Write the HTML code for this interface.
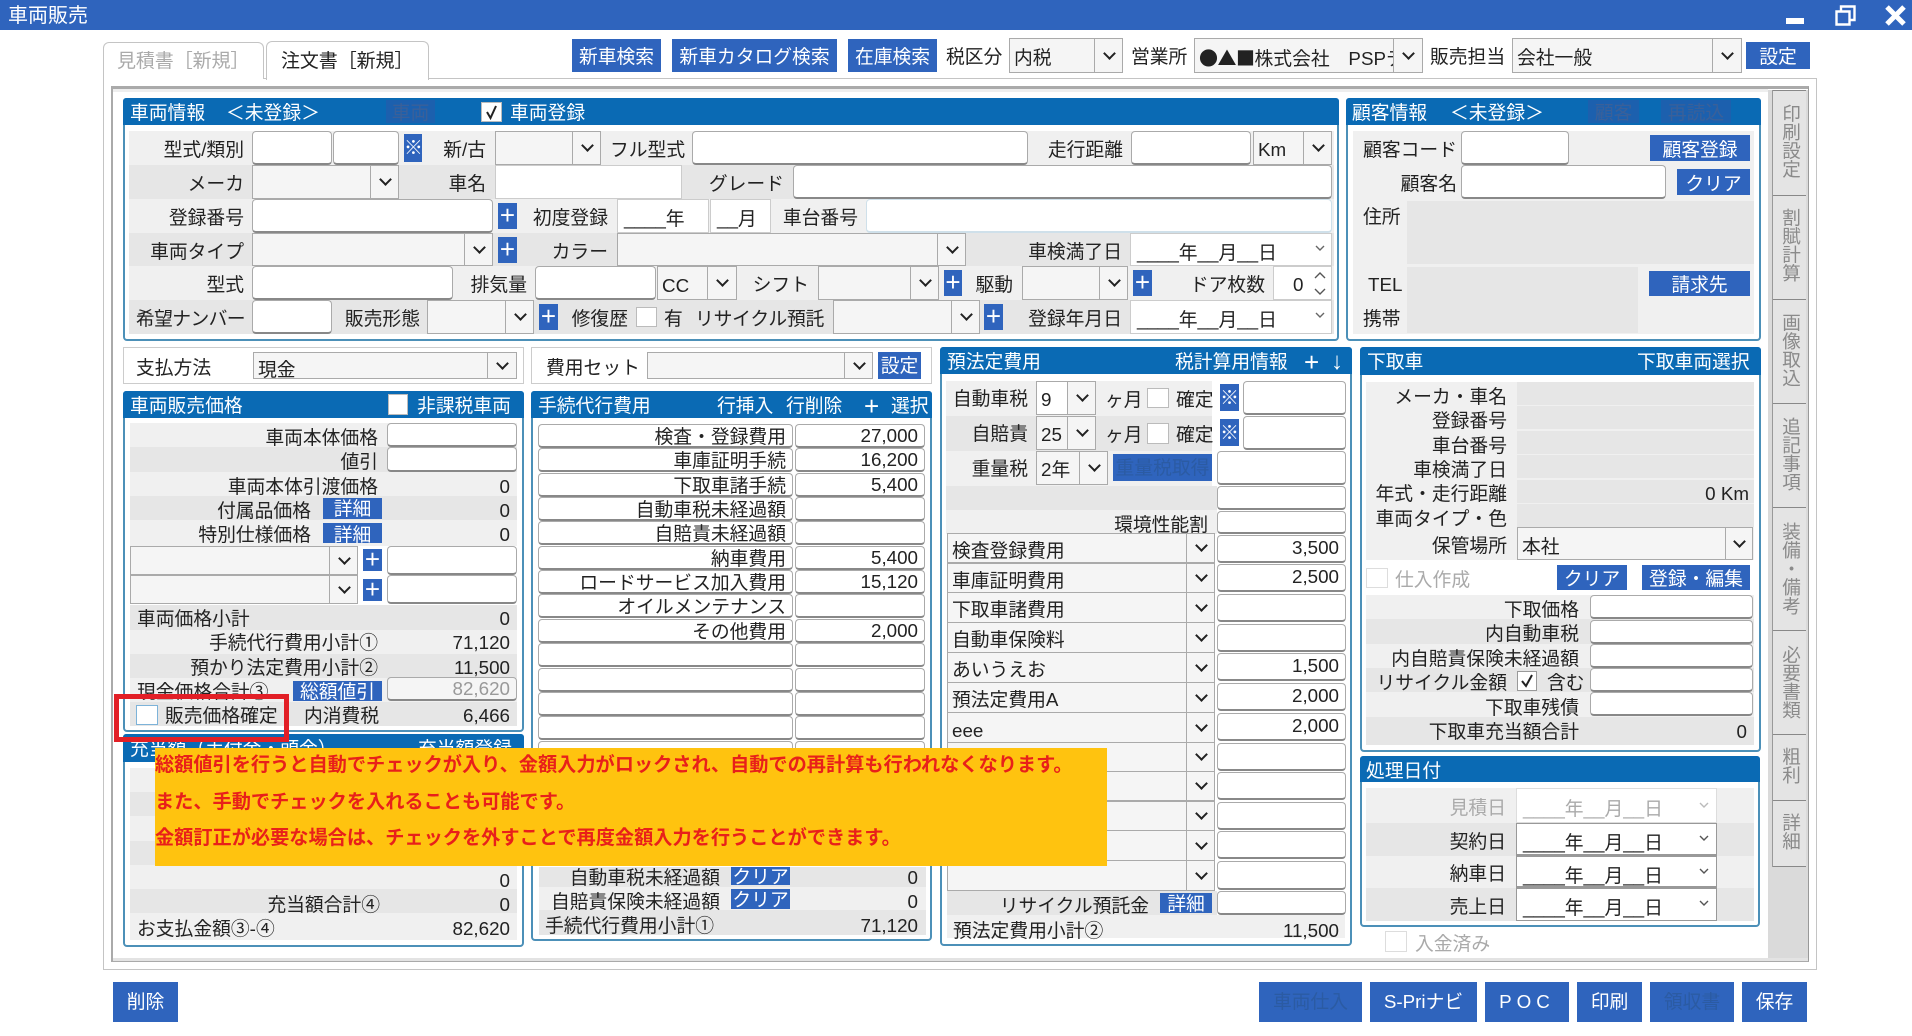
<!DOCTYPE html>
<html lang="ja"><head><meta charset="utf-8"><title>車両販売</title>
<style>
html,body{margin:0;padding:0;width:1912px;height:1036px;overflow:hidden;background:#fff}
body{position:relative;font:18.8px/24px "Liberation Sans","Noto Sans CJK JP",sans-serif;color:#222}
div,span.t{position:absolute;box-sizing:border-box}
.t{white-space:nowrap;height:24px;line-height:24px;margin-top:1px}
.q{margin-top:2px}
.z{margin-top:0}
.r{width:300px;text-align:right}
.w{color:#fff}
.g{color:#aaa}
.b{background:#f0f0f0}
.c{background:#e6e6e6}
.p{border:2px solid #4c90b8;border-radius:4px;background:#fff}
.h{background:#0a6ab4;border-radius:3px 3px 0 0}
.btn{background:#2f64bd;color:#fff;text-align:center;white-space:nowrap;overflow:hidden}
.dis{color:#2b5ba3}
.hd{background:#1c60ae;color:#3a6099;text-align:center;white-space:nowrap}
.i{background:#fff;border:1px solid #aaa;border-bottom:2px solid #888;border-radius:4px;text-align:right;padding-right:6px;overflow:hidden;white-space:nowrap}
.sel{background:#f5f5f5;border:1px solid #aaa;padding-left:4px;overflow:hidden;white-space:nowrap;--a:27px}
.sel::before{content:"";position:absolute;right:0;top:0;bottom:0;width:var(--a);background:#f5f5f5;border-left:1px solid #aaa}
.sel::after{content:"";position:absolute;right:calc(var(--a)/2 - 5px);top:calc(50% - 7px);width:7px;height:7px;border-right:2.5px solid #222;border-bottom:2.5px solid #222;transform:rotate(45deg)}
.d{background:#fff;border:1px solid #ccc;padding-left:6px;white-space:nowrap;overflow:hidden}
.cb{background:#fff;border:1px solid #bbb}
.pl{background:#2f64bd;color:#fff;text-align:center;font-size:26px;font-weight:300}
.st{width:34px;left:1772px;background:#e4e4e4;border-top:1px solid #888}
.v{writing-mode:vertical-rl;text-orientation:upright;left:1778px;width:24px;line-height:24px;font-size:18.6px;color:#8a8a8a;white-space:nowrap}
.y{z-index:7;color:#e8201a;font-weight:700;font-size:19.2px;margin-top:2px}
svg{position:absolute}
</style></head><body>

<!-- Title bar -->
<div style="left:0;top:0;width:1912px;height:30px;background:#2f64bd"></div>
<span class="t w" style="left:8px;top:3px;font-size:20px">車両販売</span>
<div style="left:1786px;top:18px;width:18px;height:6px;background:#fff"></div>
<svg style="left:1835px;top:5px" width="21" height="21"><path d="M6 6V1.5H19.5V15H15M1.5 6.5H14.5V19.5H1.5Z" fill="none" stroke="#fff" stroke-width="2.4"/></svg>
<svg style="left:1885px;top:5px" width="21" height="21"><path d="M2 2L19 19M19 2L2 19" stroke="#fff" stroke-width="5"/></svg>

<!-- Tabs and outer frame -->
<div style="left:103px;top:78px;width:1714px;height:892px;border:1px solid #c4c4c4;background:#fff"></div>
<div style="left:103px;top:42px;width:161px;height:37px;border:1px solid #c4c4c4;border-bottom:0;border-radius:6px 6px 0 0;background:#fff"></div>
<span class="t g" style="left:117px;top:49px;font-size:19px;letter-spacing:-.1px">見積書［新規］</span>
<div style="left:266px;top:41px;width:163px;height:39px;border:1px solid #c4c4c4;border-bottom:0;border-radius:6px 6px 0 0;background:#fff"></div>
<span class="t" style="left:281px;top:49px;font-size:19px;letter-spacing:-.1px">注文書［新規］</span>
<div style="left:111px;top:86px;width:1698px;height:876px;border:2px solid #aaa;border-top:3px solid #aaa;border-right:1px solid #999;background:#fff"></div>
<div style="left:113px;top:89px;width:1655px;height:3px;background:#eee"></div>
<div style="left:113px;top:958px;width:1695px;height:3px;background:#e3e3e3"></div>

<!-- Top toolbar -->
<div class="btn" style="left:572px;top:39px;width:89px;height:33px;line-height:35px">新車検索</div>
<div class="btn" style="left:672px;top:39px;width:165px;height:33px;line-height:35px">新車カタログ検索</div>
<div class="btn" style="left:848px;top:39px;width:89px;height:33px;line-height:35px">在庫検索</div>
<span class="t" style="left:946px;top:44px">税区分</span>
<div class="sel" style="left:1009px;top:38px;width:114px;height:35px;line-height:37px;--a:27px">内税</div>
<span class="t" style="left:1131px;top:44px">営業所</span>
<div class="sel" style="left:1194px;top:38px;width:229px;height:35px;line-height:37px;--a:28px"><span style="font-family:'Noto Sans CJK JP',sans-serif;font-size:19px;letter-spacing:-.5px">●▲■</span>株式会社　PSPテスト</div>
<span class="t" style="left:1430px;top:44px">販売担当</span>
<div class="sel" style="left:1512px;top:38px;width:230px;height:35px;line-height:37px;--a:28px">会社一般</div>
<div class="btn" style="left:1746px;top:42px;width:64px;height:27px;line-height:29px">設定</div>

<!-- Sidebar -->
<div style="left:1768px;top:90px;width:40px;height:868px;background:#dadada"></div>
<div class="st" style="top:90px;height:105px"></div>
<div class="st" style="top:195px;height:104px"></div>
<div class="st" style="top:299px;height:104px"></div>
<div class="st" style="top:403px;height:104px"></div>
<div class="st" style="top:507px;height:123px"></div>
<div class="st" style="top:630px;height:104px"></div>
<div class="st" style="top:734px;height:66px"></div>
<div class="st" style="top:800px;height:67px;border-bottom:1px solid #888"></div>
<div style="left:1772px;top:90px;width:1px;height:777px;background:#999"></div>
<div class="v" style="top:104px">印刷設定</div>
<div class="v" style="top:208px">割賦計算</div>
<div class="v" style="top:313px">画像取込</div>
<div class="v" style="top:417px">追記事項</div>
<div class="v" style="top:522px">装備・備考</div>
<div class="v" style="top:645px">必要書類</div>
<div class="v" style="top:747px">粗利</div>
<div class="v" style="top:813px">詳細</div>

<!-- 車両情報 -->
<div class="p" style="left:123px;top:98px;width:1216px;height:243px"></div>
<div class="h" style="left:123px;top:98px;width:1216px;height:27px"></div>
<span class="t w" style="left:130px;top:100px">車両情報</span>
<span class="t w" style="left:226px;top:100px">＜未登録＞</span>
<div class="hd" style="left:386px;top:100px;width:49px;height:23px;line-height:25px">車両</div>
<div class="cb" style="left:481px;top:102px;width:21px;height:20px"></div>
<svg style="left:483px;top:104px" width="17" height="16"><path d="M4 8L7.5 14L13 2" fill="none" stroke="#222" stroke-width="2"/></svg>
<span class="t w" style="left:510px;top:100px">車両登録</span>

<div class="b" style="left:129px;top:131px;width:1205px;height:34px"></div>
<div class="c" style="left:129px;top:165px;width:1205px;height:34px"></div>
<div class="b" style="left:129px;top:199px;width:1205px;height:34px"></div>
<div class="c" style="left:129px;top:233px;width:1205px;height:33px"></div>
<div class="b" style="left:129px;top:266px;width:1205px;height:34px"></div>
<div class="c" style="left:129px;top:300px;width:1205px;height:34px"></div>

<span class="t r q" style="left:-56px;top:136px">型式/類別</span>
<div class="i" style="left:252px;top:131px;width:80px;height:34px"></div>
<div class="i" style="left:333px;top:131px;width:66px;height:34px"></div>
<div class="btn" style="left:404px;top:134px;width:18px;height:28px;line-height:28px">※</div>
<span class="t r q" style="left:186px;top:136px">新/古</span>
<div class="sel" style="left:495px;top:131px;width:106px;height:34px"></div>
<span class="t q" style="left:610px;top:136px">フル型式</span>
<div class="i" style="left:692px;top:131px;width:336px;height:34px"></div>
<span class="t r q" style="left:823px;top:136px">走行距離</span>
<div class="i" style="left:1131px;top:131px;width:120px;height:34px"></div>
<div class="sel" style="left:1253px;top:131px;width:79px;height:34px;line-height:36px;--a:27px">Km</div>

<span class="t r q" style="left:-56px;top:170px">メーカ</span>
<div class="sel" style="left:252px;top:165px;width:147px;height:34px"></div>
<span class="t r q" style="left:186px;top:170px">車名</span>
<div class="d" style="left:495px;top:165px;width:187px;height:34px"></div>
<span class="t r q" style="left:484px;top:170px">グレード</span>
<div class="i" style="left:793px;top:165px;width:539px;height:34px"></div>

<span class="t r q" style="left:-56px;top:204px">登録番号</span>
<div class="i" style="left:252px;top:199px;width:241px;height:34px"></div>
<div class="pl" style="left:498px;top:203px;width:19px;height:26px;line-height:25px">+</div>
<span class="t r q" style="left:308px;top:204px">初度登録</span>
<div class="d" style="left:617px;top:199px;width:92px;height:34px;line-height:38px">____年</div>
<div class="d" style="left:710px;top:199px;width:61px;height:34px;line-height:38px">__月</div>
<span class="t r q" style="left:558px;top:204px">車台番号</span>
<div class="i" style="left:866px;top:199px;width:466px;height:34px;border-color:#cfe0ea"></div>

<span class="t r q" style="left:-56px;top:238px">車両タイプ</span>
<div class="sel" style="left:252px;top:233px;width:241px;height:33px"></div>
<div class="pl" style="left:498px;top:237px;width:19px;height:26px;line-height:25px">+</div>
<span class="t r q" style="left:308px;top:238px">カラー</span>
<div class="sel" style="left:617px;top:233px;width:349px;height:33px"></div>
<span class="t r q" style="left:822px;top:238px">車検満了日</span>
<div class="d" style="left:1130px;top:233px;width:202px;height:33px;line-height:38px">____年__月__日</div>
<svg style="left:1315px;top:245px" width="10" height="7"><path d="M1 1l4 4 4-4" fill="none" stroke="#666" stroke-width="1.4"/></svg>

<span class="t r q" style="left:-56px;top:271px">型式</span>
<div class="i" style="left:252px;top:266px;width:201px;height:34px"></div>
<span class="t r q" style="left:227px;top:271px">排気量</span>
<div class="i" style="left:535px;top:266px;width:121px;height:34px"></div>
<div class="sel" style="left:657px;top:266px;width:80px;height:34px;line-height:38px;--a:28px">CC</div>
<span class="t r q" style="left:509px;top:271px">シフト</span>
<div class="sel" style="left:818px;top:266px;width:121px;height:34px"></div>
<div class="pl" style="left:944px;top:270px;width:18px;height:26px;line-height:25px">+</div>
<span class="t r q" style="left:713px;top:271px">駆動</span>
<div class="sel" style="left:1022px;top:266px;width:106px;height:34px"></div>
<div class="pl" style="left:1133px;top:270px;width:19px;height:26px;line-height:25px">+</div>
<span class="t r q" style="left:965px;top:271px">ドア枚数</span>
<div class="d" style="left:1273px;top:266px;width:59px;height:34px;line-height:36px;padding-left:19px">0</div>
<svg style="left:1314px;top:271px" width="12" height="26"><path d="M1 7l5-5 5 5M1 18l5 5 5-5" fill="none" stroke="#555" stroke-width="1.4"/></svg>

<span class="t r q" style="left:-55px;top:305px;letter-spacing:-.6px">希望ナンバー</span>
<div class="i" style="left:252px;top:300px;width:80px;height:34px"></div>
<span class="t r q" style="left:120px;top:305px">販売形態</span>
<div class="sel" style="left:427px;top:300px;width:107px;height:34px"></div>
<div class="pl" style="left:539px;top:304px;width:19px;height:26px;line-height:25px">+</div>
<span class="t r q" style="left:328px;top:305px">修復歴</span>
<div class="cb" style="left:636px;top:307px;width:21px;height:20px"></div>
<span class="t q" style="left:664px;top:305px">有</span>
<span class="t q" style="left:695px;top:305px;letter-spacing:-.2px">リサイクル預託</span>
<div class="sel" style="left:833px;top:300px;width:147px;height:34px"></div>
<div class="pl" style="left:984px;top:304px;width:19px;height:26px;line-height:25px">+</div>
<span class="t r q" style="left:822px;top:305px">登録年月日</span>
<div class="d" style="left:1130px;top:300px;width:202px;height:34px;line-height:38px">____年__月__日</div>
<svg style="left:1315px;top:312px" width="10" height="7"><path d="M1 1l4 4 4-4" fill="none" stroke="#666" stroke-width="1.4"/></svg>

<!-- 顧客情報 -->
<div class="p" style="left:1346px;top:98px;width:415px;height:243px"></div>
<div class="h" style="left:1346px;top:98px;width:415px;height:27px"></div>
<span class="t w" style="left:1352px;top:100px">顧客情報</span>
<span class="t w" style="left:1450px;top:100px">＜未登録＞</span>
<div class="hd" style="left:1588px;top:100px;width:51px;height:23px;line-height:25px">顧客</div>
<div class="hd" style="left:1661px;top:100px;width:70px;height:23px;line-height:25px">再読込</div>
<div class="b" style="left:1353px;top:131px;width:401px;height:203px"></div>
<span class="t r q" style="left:1157px;top:136px">顧客コード</span>
<div class="i" style="left:1461px;top:131px;width:108px;height:34px"></div>
<div class="btn" style="left:1650px;top:135px;width:100px;height:26px;line-height:29px">顧客登録</div>
<span class="t r q" style="left:1157px;top:170px">顧客名</span>
<div class="i" style="left:1461px;top:165px;width:205px;height:34px"></div>
<div class="btn" style="left:1677px;top:169px;width:73px;height:26px;line-height:29px">クリア</div>
<span class="t" style="left:1363px;top:204px">住所</span>
<div class="c" style="left:1407px;top:201px;width:347px;height:63px"></div>
<span class="t" style="left:1368px;top:272px">TEL</span>
<div class="c" style="left:1407px;top:267px;width:231px;height:66px"></div>
<div class="btn" style="left:1649px;top:271px;width:101px;height:25px;line-height:28px">請求先</div>
<span class="t" style="left:1363px;top:306px">携帯</span>

<!-- 支払方法 / 費用セット -->
<div style="left:123px;top:347px;width:401px;height:37px;border:1px solid #ccc"></div>
<span class="t z" style="left:136px;top:356px">支払方法</span>
<div class="sel" style="left:253px;top:352px;width:264px;height:27px;line-height:33px;--a:28px">現金</div>
<div style="left:531px;top:347px;width:401px;height:37px;border:1px solid #ccc"></div>
<span class="t z" style="left:546px;top:356px">費用セット</span>
<div class="sel" style="left:647px;top:352px;width:226px;height:27px;--a:27px"></div>
<div class="btn" style="left:878px;top:352px;width:43px;height:27px;line-height:27px">設定</div>

<!-- 車両販売価格 -->
<div class="p" style="left:123px;top:391px;width:401px;height:341px"></div>
<div class="h" style="left:123px;top:391px;width:401px;height:27px"></div>
<span class="t w" style="left:130px;top:393px">車両販売価格</span>
<div class="cb" style="left:388px;top:394px;width:20px;height:21px"></div>
<span class="t w" style="left:417px;top:393px">非課税車両</span>
<div class="b" style="left:130px;top:423px;width:387px;height:24px"></div>
<div class="c" style="left:130px;top:447px;width:387px;height:25px"></div>
<div class="b" style="left:130px;top:472px;width:387px;height:24px"></div>
<div class="c" style="left:130px;top:496px;width:387px;height:24px"></div>
<div class="b" style="left:130px;top:520px;width:387px;height:26px"></div>
<div class="c" style="left:130px;top:605px;width:387px;height:25px"></div>
<div class="b" style="left:130px;top:630px;width:387px;height:24px"></div>
<div class="c" style="left:130px;top:654px;width:387px;height:24px"></div>
<div class="b" style="left:130px;top:678px;width:387px;height:24px"></div>
<div class="c" style="left:130px;top:702px;width:387px;height:24px"></div>
<span class="t r z" style="left:78px;top:426px">車両本体価格</span>
<div class="i" style="left:387px;top:423px;width:130px;height:24px"></div>
<span class="t r z" style="left:78px;top:450px">値引</span>
<div class="i" style="left:387px;top:447px;width:130px;height:25px"></div>
<span class="t r z" style="left:78px;top:475px">車両本体引渡価格</span>
<span class="t r z" style="left:210px;top:475px">0</span>
<span class="t r z" style="left:11px;top:499px">付属品価格</span>
<div class="btn" style="left:323px;top:498px;width:59px;height:21px;line-height:22px">詳細</div>
<span class="t r z" style="left:210px;top:499px">0</span>
<span class="t r z" style="left:11px;top:523px">特別仕様価格</span>
<div class="btn" style="left:323px;top:523px;width:59px;height:20px;line-height:23px">詳細</div>
<span class="t r z" style="left:210px;top:523px">0</span>
<div class="sel" style="left:130px;top:546px;width:228px;height:29px;--a:27px"></div>
<div class="pl" style="left:363px;top:549px;width:19px;height:22px;line-height:21px">+</div>
<div class="i" style="left:387px;top:546px;width:130px;height:29px"></div>
<div class="sel" style="left:130px;top:575px;width:228px;height:29px;--a:27px"></div>
<div class="pl" style="left:363px;top:579px;width:19px;height:22px;line-height:21px">+</div>
<div class="i" style="left:387px;top:575px;width:130px;height:29px"></div>
<span class="t z" style="left:137px;top:607px">車両価格小計</span>
<span class="t r z" style="left:210px;top:607px">0</span>
<span class="t r z" style="left:78px;top:631px">手続代行費用小計①</span>
<span class="t r z" style="left:210px;top:631px">71,120</span>
<span class="t r z" style="left:78px;top:656px">預かり法定費用小計②</span>
<span class="t r z" style="left:210px;top:656px">11,500</span>
<span class="t z" style="left:137px;top:680px">現金価格合計③</span>
<div class="btn" style="left:293px;top:681px;width:89px;height:20px;line-height:22px">総額値引</div>
<div class="i" style="left:387px;top:677px;width:130px;height:24px;line-height:21px;color:#999;background:#f5f5f5">82,620</div>
<div class="cb" style="left:136px;top:705px;width:22px;height:20px;border:1px solid #7db3d9"></div>
<span class="t z" style="left:165px;top:704px">販売価格確定</span>
<span class="t z" style="left:304px;top:704px">内消費税</span>
<span class="t r z" style="left:210px;top:704px">6,466</span>
<div style="left:114px;top:694px;width:175px;height:48px;border:5px solid #e21f26;z-index:5"></div>

<!-- 充当額 -->
<div class="p" style="left:123px;top:734px;width:401px;height:213px"></div>
<div class="h" style="left:123px;top:734px;width:401px;height:28px"></div>
<span class="t w" style="left:130px;top:736px">充当額（手付金・頭金）</span>
<span class="t w" style="left:418px;top:736px">充当額登録</span>
<div class="b" style="left:130px;top:768px;width:387px;height:24px"></div>
<div class="c" style="left:130px;top:792px;width:387px;height:24px"></div>
<div class="b" style="left:130px;top:816px;width:387px;height:25px"></div>
<div class="c" style="left:130px;top:841px;width:387px;height:24px"></div>
<div class="b" style="left:130px;top:865px;width:387px;height:24px"></div>
<div class="c" style="left:130px;top:889px;width:387px;height:24px"></div>
<div class="b" style="left:130px;top:913px;width:387px;height:27px"></div>
<span class="t r" style="left:210px;top:868px">0</span>
<span class="t r" style="left:80px;top:892px">充当額合計④</span>
<span class="t r" style="left:210px;top:892px">0</span>
<span class="t" style="left:137px;top:916px">お支払金額③-④</span>
<span class="t r" style="left:210px;top:916px">82,620</span>

<!-- 手続代行費用 -->
<div class="p" style="left:531px;top:391px;width:401px;height:550px"></div>
<div class="h" style="left:531px;top:391px;width:401px;height:27px"></div>
<span class="t w" style="left:538px;top:393px">手続代行費用</span>
<span class="t w" style="left:717px;top:393px">行挿入</span>
<span class="t w" style="left:786px;top:393px">行削除</span>
<span class="t w" style="left:864px;top:393px;font-size:26px">+</span>
<span class="t w" style="left:891px;top:393px">選択</span>

<div class="i" style="left:538px;top:424px;width:255px;height:24px;line-height:23px">検査・登録費用</div>
<div class="i" style="left:795px;top:424px;width:130px;height:24px;line-height:22px">27,000</div>
<div class="i" style="left:538px;top:448px;width:255px;height:24px;line-height:23px">車庫証明手続</div>
<div class="i" style="left:795px;top:448px;width:130px;height:24px;line-height:22px">16,200</div>
<div class="i" style="left:538px;top:473px;width:255px;height:24px;line-height:23px">下取車諸手続</div>
<div class="i" style="left:795px;top:473px;width:130px;height:24px;line-height:22px">5,400</div>
<div class="i" style="left:538px;top:497px;width:255px;height:24px;line-height:23px">自動車税未経過額</div>
<div class="i" style="left:795px;top:497px;width:130px;height:24px"></div>
<div class="i" style="left:538px;top:521px;width:255px;height:24px;line-height:23px">自賠責未経過額</div>
<div class="i" style="left:795px;top:521px;width:130px;height:24px"></div>
<div class="i" style="left:538px;top:546px;width:255px;height:24px;line-height:23px">納車費用</div>
<div class="i" style="left:795px;top:546px;width:130px;height:24px;line-height:22px">5,400</div>
<div class="i" style="left:538px;top:570px;width:255px;height:24px;line-height:23px">ロードサービス加入費用</div>
<div class="i" style="left:795px;top:570px;width:130px;height:24px;line-height:22px">15,120</div>
<div class="i" style="left:538px;top:594px;width:255px;height:24px;line-height:23px">オイルメンテナンス</div>
<div class="i" style="left:795px;top:594px;width:130px;height:24px"></div>
<div class="i" style="left:538px;top:619px;width:255px;height:24px;line-height:23px">その他費用</div>
<div class="i" style="left:795px;top:619px;width:130px;height:24px;line-height:22px">2,000</div>
<div class="i" style="left:538px;top:643px;width:255px;height:24px"></div>
<div class="i" style="left:795px;top:643px;width:130px;height:24px"></div>
<div class="i" style="left:538px;top:668px;width:255px;height:24px"></div>
<div class="i" style="left:795px;top:668px;width:130px;height:24px"></div>
<div class="i" style="left:538px;top:692px;width:255px;height:24px"></div>
<div class="i" style="left:795px;top:692px;width:130px;height:24px"></div>
<div class="i" style="left:538px;top:716px;width:255px;height:24px"></div>
<div class="i" style="left:795px;top:716px;width:130px;height:24px"></div>
<div class="i" style="left:538px;top:741px;width:255px;height:24px"></div>
<div class="i" style="left:795px;top:741px;width:130px;height:24px"></div>

<div class="c" style="left:539px;top:867px;width:387px;height:20px"></div>
<div class="b" style="left:539px;top:887px;width:387px;height:23px"></div>
<div class="c" style="left:539px;top:910px;width:387px;height:25px"></div>
<span class="t r" style="left:420px;top:865px">自動車税未経過額</span>
<div class="btn" style="left:731px;top:867px;width:59px;height:18px;line-height:20px">クリア</div>
<span class="t r" style="left:618px;top:865px">0</span>
<span class="t r" style="left:420px;top:889px">自賠責保険未経過額</span>
<div class="btn" style="left:731px;top:889px;width:59px;height:20px;line-height:21px">クリア</div>
<span class="t r" style="left:618px;top:889px">0</span>
<span class="t" style="left:545px;top:913px">手続代行費用小計①</span>
<span class="t r" style="left:618px;top:913px">71,120</span>

<!-- 預法定費用 -->
<div class="p" style="left:940px;top:347px;width:412px;height:599px"></div>
<div class="h" style="left:940px;top:347px;width:412px;height:27px"></div>
<span class="t w" style="left:947px;top:349px">預法定費用</span>
<span class="t w" style="left:1175px;top:349px">税計算用情報</span>
<span class="t w" style="left:1304px;top:349px;font-size:26px">+</span>
<span class="t w" style="left:1331px;top:349px;font-size:24px">↓</span>
<div class="b" style="left:946px;top:381px;width:266px;height:35px"></div>
<div class="c" style="left:946px;top:416px;width:266px;height:35px"></div>
<div class="b" style="left:946px;top:451px;width:266px;height:35px"></div>
<div class="c" style="left:946px;top:486px;width:271px;height:24px"></div>
<div class="b" style="left:946px;top:510px;width:271px;height:24px"></div>

<span class="t r" style="left:728px;top:386px">自動車税</span>
<div class="sel" style="left:1036px;top:381px;width:60px;height:34px;line-height:36px;--a:27px;background:#fff">9</div>
<span class="t" style="left:1105px;top:387px">ヶ月</span>
<div class="cb" style="left:1147px;top:388px;width:22px;height:20px"></div>
<span class="t" style="left:1176px;top:387px">確定</span>
<div class="btn" style="left:1220px;top:384px;width:19px;height:27px;line-height:27px">※</div>
<div class="i" style="left:1243px;top:381px;width:103px;height:34px"></div>

<span class="t r" style="left:728px;top:421px">自賠責</span>
<div class="sel" style="left:1036px;top:416px;width:60px;height:34px;line-height:36px;--a:27px">25</div>
<span class="t" style="left:1105px;top:422px">ヶ月</span>
<div class="cb" style="left:1147px;top:423px;width:22px;height:21px"></div>
<span class="t" style="left:1176px;top:422px">確定</span>
<div class="btn" style="left:1220px;top:419px;width:19px;height:27px;line-height:27px">※</div>
<div class="i" style="left:1243px;top:416px;width:103px;height:34px"></div>

<span class="t r" style="left:728px;top:456px">重量税</span>
<div class="sel" style="left:1036px;top:451px;width:72px;height:34px;line-height:36px;--a:27px">2年</div>
<div class="btn" style="left:1113px;top:454px;width:99px;height:27px;line-height:27px;color:#2b5ba3">重量税取得</div>
<div class="i" style="left:1217px;top:451px;width:129px;height:34px"></div>
<div class="i" style="left:1217px;top:486px;width:129px;height:24px"></div>
<span class="t r" style="left:908px;top:512px">環境性能割</span>
<div class="i" style="left:1217px;top:511px;width:129px;height:23px"></div>

<div class="sel" style="left:947px;top:533px;width:268px;height:30px;line-height:34px;--a:27px">検査登録費用</div>
<div class="sel" style="left:947px;top:563px;width:268px;height:30px;line-height:34px;--a:27px">車庫証明費用</div>
<div class="sel" style="left:947px;top:592px;width:268px;height:31px;line-height:34px;--a:27px">下取車諸費用</div>
<div class="sel" style="left:947px;top:622px;width:268px;height:31px;line-height:34px;--a:27px">自動車保険料</div>
<div class="sel" style="left:947px;top:652px;width:268px;height:31px;line-height:34px;--a:27px">あいうえお</div>
<div class="sel" style="left:947px;top:682px;width:268px;height:31px;line-height:34px;--a:27px">預法定費用A</div>
<div class="sel" style="left:947px;top:712px;width:268px;height:31px;line-height:36px;--a:27px">eee</div>
<div class="sel" style="left:947px;top:742px;width:268px;height:30px;--a:27px"></div>
<div class="sel" style="left:947px;top:771px;width:268px;height:30px;--a:27px"></div>
<div class="sel" style="left:947px;top:801px;width:268px;height:30px;--a:27px"></div>
<div class="sel" style="left:947px;top:830px;width:268px;height:31px;--a:27px"></div>
<div class="sel" style="left:947px;top:860px;width:268px;height:31px;--a:27px"></div>

<div class="i" style="left:1217px;top:535px;width:129px;height:28px;line-height:23px">3,500</div>
<div class="i" style="left:1217px;top:564px;width:129px;height:28px;line-height:23px">2,500</div>
<div class="i" style="left:1217px;top:594px;width:129px;height:28px"></div>
<div class="i" style="left:1217px;top:624px;width:129px;height:28px"></div>
<div class="i" style="left:1217px;top:653px;width:129px;height:28px;line-height:23px">1,500</div>
<div class="i" style="left:1217px;top:683px;width:129px;height:28px;line-height:23px">2,000</div>
<div class="i" style="left:1217px;top:713px;width:129px;height:28px;line-height:23px">2,000</div>
<div class="i" style="left:1217px;top:743px;width:129px;height:28px"></div>
<div class="i" style="left:1217px;top:772px;width:129px;height:28px"></div>
<div class="i" style="left:1217px;top:802px;width:129px;height:28px"></div>
<div class="i" style="left:1217px;top:831px;width:129px;height:28px"></div>
<div class="i" style="left:1217px;top:861px;width:129px;height:29px"></div>

<div class="c" style="left:947px;top:891px;width:270px;height:24px"></div>
<div class="b" style="left:947px;top:915px;width:398px;height:23px"></div>
<span class="t r" style="left:849px;top:893px">リサイクル預託金</span>
<div class="btn" style="left:1160px;top:893px;width:52px;height:20px;line-height:21px">詳細</div>
<div class="i" style="left:1217px;top:891px;width:129px;height:24px"></div>
<span class="t" style="left:953px;top:918px">預法定費用小計②</span>
<span class="t r" style="left:1039px;top:918px">11,500</span>

<!-- 下取車 -->
<div class="p" style="left:1360px;top:347px;width:401px;height:405px"></div>
<div class="h" style="left:1360px;top:347px;width:401px;height:28px"></div>
<span class="t w" style="left:1367px;top:349px">下取車</span>
<span class="t w" style="left:1637px;top:349px">下取車両選択</span>
<div class="b" style="left:1366px;top:382px;width:388px;height:178px"></div>
<div class="c" style="left:1517px;top:382px;width:237px;height:23px"></div>
<div class="c" style="left:1517px;top:406px;width:237px;height:23px"></div>
<div class="c" style="left:1517px;top:431px;width:237px;height:23px"></div>
<div class="c" style="left:1517px;top:455px;width:237px;height:23px"></div>
<div class="c" style="left:1517px;top:480px;width:237px;height:23px"></div>
<div class="c" style="left:1517px;top:504px;width:237px;height:23px"></div>
<span class="t r" style="left:1207px;top:384px">メーカ・車名</span>
<span class="t r" style="left:1207px;top:408px">登録番号</span>
<span class="t r" style="left:1207px;top:433px">車台番号</span>
<span class="t r" style="left:1207px;top:457px">車検満了日</span>
<span class="t r" style="left:1207px;top:481px">年式・走行距離</span>
<span class="t r" style="left:1449px;top:481px">0 Km</span>
<span class="t r" style="left:1207px;top:506px">車両タイプ・色</span>
<span class="t r" style="left:1207px;top:533px">保管場所</span>
<div class="sel" style="left:1517px;top:527px;width:236px;height:33px;line-height:37px;--a:26px">本社</div>
<div class="cb" style="left:1366px;top:568px;width:22px;height:20px;border-color:#ddd"></div>
<span class="t g" style="left:1395px;top:567px">仕入作成</span>
<div class="btn" style="left:1557px;top:565px;width:70px;height:25px;line-height:27px">クリア</div>
<div class="btn" style="left:1642px;top:565px;width:108px;height:25px;line-height:27px">登録・編集</div>
<div class="b" style="left:1366px;top:595px;width:388px;height:24px"></div>
<div class="c" style="left:1366px;top:619px;width:388px;height:25px"></div>
<div class="b" style="left:1366px;top:644px;width:388px;height:24px"></div>
<div class="c" style="left:1366px;top:668px;width:388px;height:24px"></div>
<div class="b" style="left:1366px;top:692px;width:388px;height:25px"></div>
<div class="c" style="left:1366px;top:717px;width:388px;height:28px"></div>
<span class="t r" style="left:1279px;top:597px">下取価格</span>
<div class="i" style="left:1590px;top:595px;width:163px;height:24px"></div>
<span class="t r" style="left:1279px;top:621px">内自動車税</span>
<div class="i" style="left:1590px;top:620px;width:163px;height:24px"></div>
<span class="t r" style="left:1279px;top:646px">内自賠責保険未経過額</span>
<div class="i" style="left:1590px;top:644px;width:163px;height:24px"></div>
<span class="t r" style="left:1207px;top:670px">リサイクル金額</span>
<div class="cb" style="left:1517px;top:671px;width:20px;height:20px;border-color:#999"></div>
<svg style="left:1519px;top:673px" width="16" height="16"><path d="M3 8L7 13L13 2" fill="none" stroke="#222" stroke-width="2"/></svg>
<span class="t" style="left:1547px;top:670px">含む</span>
<div class="i" style="left:1590px;top:668px;width:163px;height:24px"></div>
<span class="t r" style="left:1279px;top:695px">下取車残債</span>
<div class="i" style="left:1590px;top:692px;width:163px;height:24px"></div>
<span class="t r" style="left:1279px;top:719px">下取車充当額合計</span>
<span class="t r" style="left:1447px;top:719px">0</span>

<!-- 処理日付 -->
<div class="p" style="left:1360px;top:756px;width:400px;height:171px"></div>
<div class="h" style="left:1360px;top:756px;width:400px;height:26px"></div>
<span class="t w" style="left:1366px;top:758px">処理日付</span>
<div class="b" style="left:1366px;top:788px;width:388px;height:35px"></div>
<div class="c" style="left:1366px;top:823px;width:388px;height:33px"></div>
<div class="b" style="left:1366px;top:856px;width:388px;height:32px"></div>
<div class="c" style="left:1366px;top:888px;width:388px;height:33px"></div>
<span class="t r g" style="left:1206px;top:795px">見積日</span>
<span class="t r" style="left:1206px;top:829px">契約日</span>
<span class="t r" style="left:1206px;top:861px">納車日</span>
<span class="t r" style="left:1206px;top:894px">売上日</span>
<div class="d g" style="left:1516px;top:788px;width:201px;height:35px;line-height:40px;border-color:#ddd">____年__月__日</div>
<div class="d" style="left:1516px;top:823px;width:201px;height:33px;line-height:38px;border-color:#999;border-bottom:2px solid #999">____年__月__日</div>
<div class="d" style="left:1516px;top:856px;width:201px;height:32px;line-height:38px;border-color:#999;border-bottom:2px solid #999">____年__月__日</div>
<div class="d" style="left:1516px;top:888px;width:201px;height:33px;line-height:38px;border-color:#999">____年__月__日</div>
<svg style="left:1699px;top:802px" width="10" height="7"><path d="M1 1l4 4 4-4" fill="none" stroke="#bbb" stroke-width="1.4"/></svg>
<svg style="left:1699px;top:835px" width="10" height="7"><path d="M1 1l4 4 4-4" fill="none" stroke="#555" stroke-width="1.4"/></svg>
<svg style="left:1699px;top:868px" width="10" height="7"><path d="M1 1l4 4 4-4" fill="none" stroke="#555" stroke-width="1.4"/></svg>
<svg style="left:1699px;top:900px" width="10" height="7"><path d="M1 1l4 4 4-4" fill="none" stroke="#555" stroke-width="1.4"/></svg>
<div class="cb" style="left:1385px;top:931px;width:22px;height:21px;border-color:#ddd"></div>
<span class="t g" style="left:1415px;top:931px">入金済み</span>

<!-- Yellow note -->
<div style="left:155px;top:748px;width:952px;height:118px;background:#ffc30f;z-index:6"></div>
<span class="t y" style="left:155px;top:752px">総額値引を行うと自動でチェックが入り、金額入力がロックされ、自動での再計算も行われなくなります。</span>
<span class="t y" style="left:155px;top:789px">また、手動でチェックを入れることも可能です。</span>
<span class="t y" style="left:155px;top:825px">金額訂正が必要な場合は、チェックを外すことで再度金額入力を行うことができます。</span>

<!-- Bottom buttons -->
<div class="btn" style="left:113px;top:982px;width:65px;height:40px;line-height:40px">削除</div>
<div class="btn" style="left:1259px;top:982px;width:103px;height:40px;line-height:40px;color:#2b5ba3">車両仕入</div>
<div class="btn" style="left:1370px;top:982px;width:107px;height:40px;line-height:40px">S-Priナビ</div>
<div class="btn" style="left:1485px;top:982px;width:84px;height:40px;line-height:40px;letter-spacing:5px">POC</div>
<div class="btn" style="left:1577px;top:982px;width:65px;height:40px;line-height:40px">印刷</div>
<div class="btn" style="left:1650px;top:982px;width:84px;height:40px;line-height:40px;color:#2b5ba3">領収書</div>
<div class="btn" style="left:1742px;top:982px;width:65px;height:40px;line-height:40px">保存</div>

</body></html>
